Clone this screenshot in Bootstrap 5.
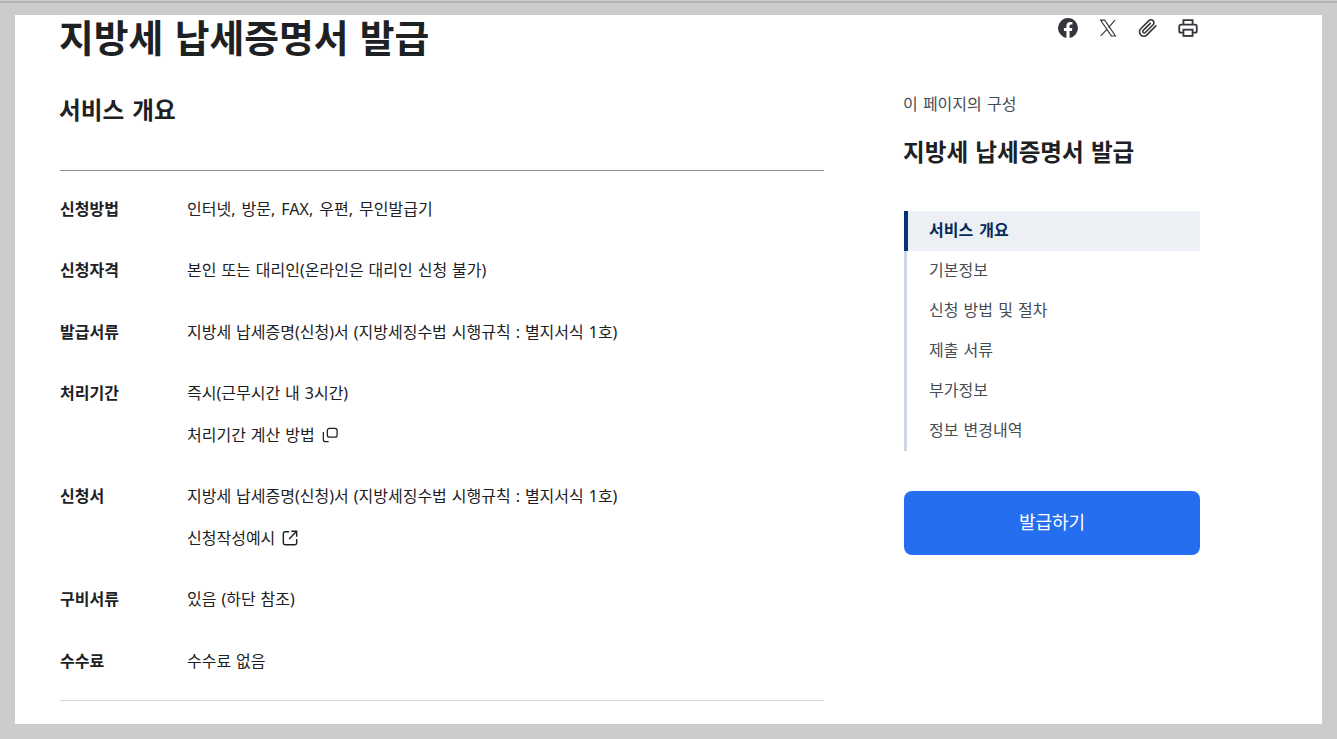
<!DOCTYPE html>
<html lang="ko">
<head>
<meta charset="utf-8">
<title>지방세 납세증명서 발급</title>
<link href="https://cdn.jsdelivr.net/npm/bootstrap@5.3.0/dist/css/bootstrap.min.css" rel="stylesheet">
<style>
html,body{height:100%;overflow:hidden}
body{background:#ccc;font-family:"Noto Sans","Noto Sans CJK KR",sans-serif;color:#1e2124;font-size:16px;line-height:1.5}
.topline{height:2px;margin-top:1px;background:#b4b4b4}
.sheet{background:#fff;margin:12px 15px 0;height:709px;padding-left:45px;width:1307px}
.main-col{width:764px;flex:none}
.side-col{width:296px;flex:none;margin-left:80px}
.page-title{font-size:37.8px;font-weight:700;line-height:46px;margin:0 0 0 -1px;color:#1e2124;word-spacing:1.5px}
.sec-title{font-size:23.6px;font-weight:700;line-height:32px;margin:33px 0 0 -1px;word-spacing:2px}
.info-list{border-top:1px solid #8a8d90;border-bottom:1px solid #d6d8da;margin:44px 0 0;padding:7px 0 8px}
.info-row{display:flex;padding:18.75px 0}
.info-row dt{width:127px;flex:none;font-weight:700;line-height:24px;margin:0}
.info-row dd{margin:0;line-height:24px;word-spacing:.8px}
.info-row dd.wide-gap{word-spacing:1.9px}
.info-row dd p{margin:0}
.info-row dd p+p{margin-top:17.5px}
.tool-row{display:flex;justify-content:flex-end;gap:20px;height:0;padding-right:2px}
.tool-row svg{width:20px;height:20px;display:block;margin-top:3px;flex:none}
.toc-label{color:#464c53;line-height:24px;margin:77px 0 0 -1px;word-spacing:1px}
.toc-title{font-size:23.6px;font-weight:700;line-height:32px;margin:20px 0 0 -1px;word-spacing:1px}
.toc-list{list-style:none;margin:43px 0 0;padding:0;border-left:3px solid #cdd6e4}
.toc-list li{height:40px;line-height:38px;padding-left:22px;color:#464c53;word-spacing:1px}
.toc-list li.on{margin-left:-3px;border-left:4px solid #003675;padding-left:21px;background:#ecf0f5;color:#052b5c;font-weight:700;word-spacing:2px}
.go-btn{display:block;width:100%;height:64px;margin-top:40px;padding-bottom:2px;background:#256ef0;color:#fff;border:0;border-radius:8px;font-size:18px}
.ico{display:inline-block;vertical-align:-2px;margin-left:2px}
</style>
</head>
<body>
<div class="topline"></div>
<div class="sheet d-flex">
  <main class="main-col">
    <h1 class="page-title">지방세 납세증명서 발급</h1>
    <h2 class="sec-title">서비스 개요</h2>
    <dl class="info-list">
      <div class="info-row"><dt>신청방법</dt><dd class="wide-gap">인터넷, 방문, FAX, 우편, 무인발급기</dd></div>
      <div class="info-row"><dt>신청자격</dt><dd>본인 또는 대리인(온라인은 대리인 신청 불가)</dd></div>
      <div class="info-row"><dt>발급서류</dt><dd>지방세 납세증명(신청)서 (지방세징수법 시행규칙 : 별지서식 1호)</dd></div>
      <div class="info-row"><dt>처리기간</dt><dd><p>즉시(근무시간 내 3시간)</p><p>처리기간 계산 방법 <svg class="ico" width="16" height="16" viewBox="0 0 18 18" fill="none" stroke="#1e2124" stroke-width="1.400"><rect x="6" y="1.500" width="11" height="10" rx="2.500"/><path d="M1.500 5.500v8.500a2.500 2.500 0 0 0 2.500 2.500h3.500"/></svg></p></dd></div>
      <div class="info-row"><dt>신청서</dt><dd><p>지방세 납세증명(신청)서 (지방세징수법 시행규칙 : 별지서식 1호)</p><p>신청작성예시 <svg class="ico" width="16" height="16" viewBox="0 0 18 18" fill="none" stroke="#1e2124" stroke-width="1.600"><path d="M8 2H3.500A2 2 0 0 0 1.500 4v10.500a2 2 0 0 0 2 2h11a2 2 0 0 0 2-2V10"/><path d="M10.500 1.500h6v6M16.500 1.500l-8.500 8.500"/></svg></p></dd></div>
      <div class="info-row"><dt>구비서류</dt><dd>있음 (하단 참조)</dd></div>
      <div class="info-row"><dt>수수료</dt><dd>수수료 없음</dd></div>
    </dl>
  </main>
  <aside class="side-col">
    <div class="tool-row">
      <svg viewBox="0 0 24 24" fill="#33363a"><path d="M24 12a12 12 0 1 0-13.900 11.900v-8.400H7.100V12h3V9.400c0-3 1.800-4.700 4.500-4.700 1.300 0 2.700.2 2.700.2v3h-1.500c-1.500 0-2 .9-2 1.900V12h3.400l-.5 3.500h-2.800v8.400A12 12 0 0 0 24 12z"/></svg>
      <svg viewBox="0 0 24 24" fill="none" stroke="#33363a" stroke-width="1.300"><path d="M3 2.500h5l13 19h-5z"/><path d="M20.500 2.500l-8 9M11 13.300 3.300 21.500"/></svg>
      <svg viewBox="0 0 24 24" fill="none" stroke="#33363a" stroke-width="1.900" stroke-linecap="round"><path d="M21.500 9.500l-10.800 10.800a5.200 5.200 0 0 1-7.400-7.400l9.800-9.800a3.500 3.500 0 0 1 5 5l-9.300 9.300a1.700 1.700 0 0 1-2.500-2.500l8.500-8.500"/></svg>
      <svg viewBox="0 0 24 24" fill="none" stroke="#33363a" stroke-width="2.200"><path d="M6.500 8V2.500h11V8"/><path d="M6.500 17.500H3.500a2 2 0 0 1-2-2V10a2 2 0 0 1 2-2h17a2 2 0 0 1 2 2v5.500a2 2 0 0 1-2 2h-3"/><rect x="6.500" y="14" width="11" height="7.500"/></svg>
    </div>
    <p class="toc-label">이 페이지의 구성</p>
    <h2 class="toc-title">지방세 납세증명서 발급</h2>
    <ul class="toc-list">
      <li class="on">서비스 개요</li>
      <li>기본정보</li>
      <li>신청 방법 및 절차</li>
      <li>제출 서류</li>
      <li>부가정보</li>
      <li>정보 변경내역</li>
    </ul>
    <button class="go-btn" type="button">발급하기</button>
  </aside>
</div>
<script src="https://cdn.jsdelivr.net/npm/bootstrap@5.3.0/dist/js/bootstrap.bundle.min.js"></script>
</body>
</html>
